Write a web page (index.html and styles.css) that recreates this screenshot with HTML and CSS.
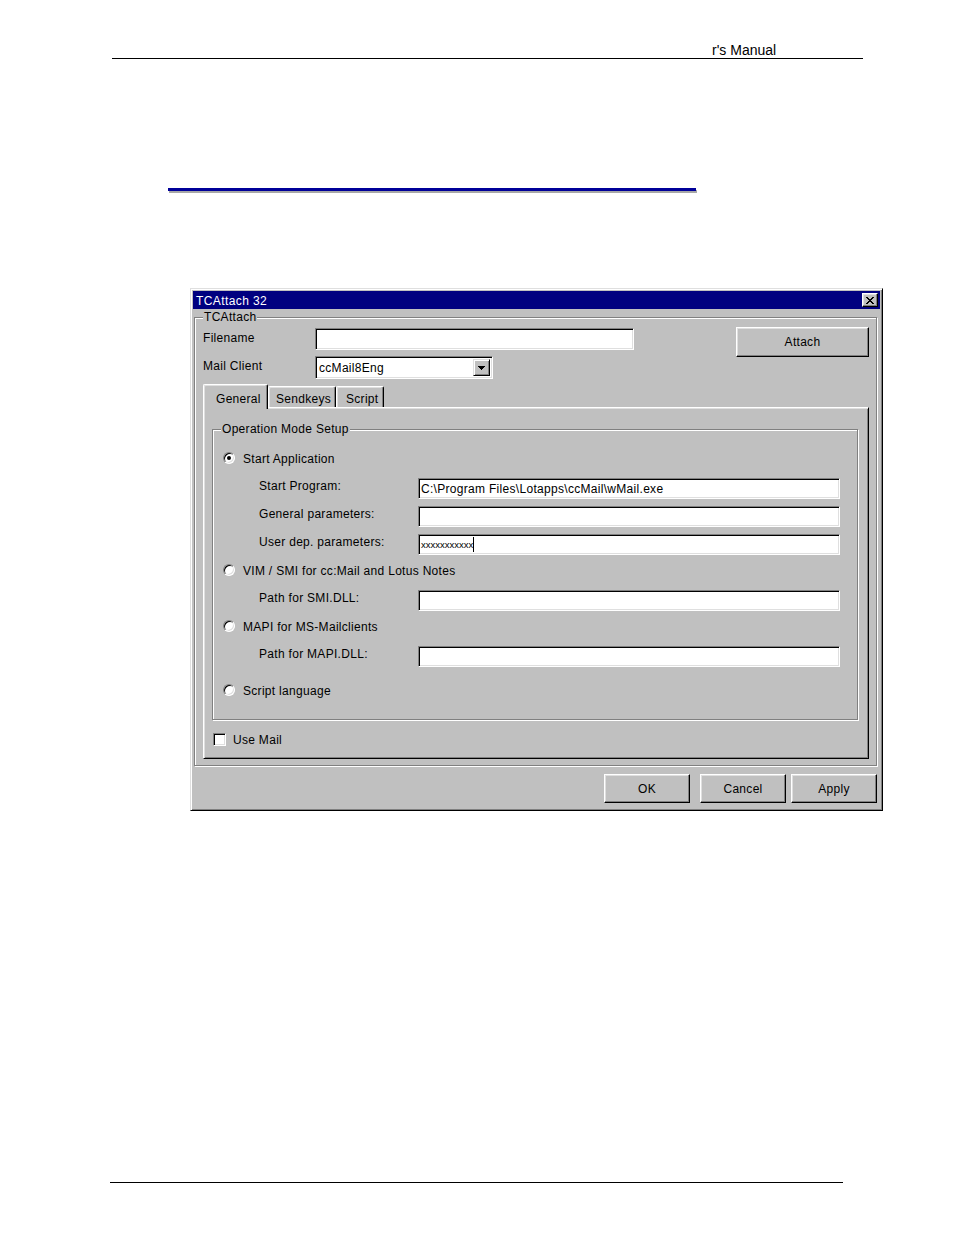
FILE: index.html
```html
<!DOCTYPE html>
<html lang="en">
<head>
<meta charset="utf-8">
<title>TCAttach 32</title>
<link rel="stylesheet" href="styles.css">
</head>
<body>
<div class="page">
  <div class="header"><span class="header-text">r's Manual</span></div>
  <div class="rule"></div>

  <div class="window">
    <div class="titlebar">
      <span class="title">TCAttach 32</span>
      <span class="close">
        <svg width="8" height="7" viewBox="0 0 8 7" shape-rendering="crispEdges"><path fill="#000" d="M0 0h2v1H0zM6 0h2v1H6zM1 1h2v1H1zM5 1h2v1H5zM2 2h4v1H2zM3 3h2v1H3zM2 4h4v1H2zM1 5h2v1H1zM5 5h2v1H5zM0 6h2v1H0zM6 6h2v1H6z"/></svg>
      </span>
    </div>

    <div class="client">
      <fieldset class="group main">
        <legend>TCAttach</legend>
        <div class="top">
          <div class="fields">
            <div class="frow r1"><span class="flabel">Filename</span><span class="input filename"></span></div>
            <div class="frow r2"><span class="flabel">Mail Client</span>
              <span class="input combo"><span class="combo-text">ccMail8Eng</span>
                <span class="drop"><svg width="7" height="4" viewBox="0 0 7 4" shape-rendering="crispEdges"><path fill="#000" d="M0 0h7v1H0zM1 1h5v1H1zM2 2h3v1H2zM3 3h1v1H3z"/></svg></span>
              </span>
            </div>
          </div>
          <div class="btn attach">Attach</div>
        </div>

        <div class="tabs">
          <div class="tab active t-general">General</div>
          <div class="tab t-send">Sendkeys</div>
          <div class="tab t-script">Script</div>
        </div>

        <div class="panel">
          <fieldset class="group ops">
            <legend>Operation Mode Setup</legend>
            <div class="rrow m14"><span class="radio checked"></span><span class="rtext">Start Application</span></div>
            <div class="field m12"><span class="plabel">Start Program:</span><span class="input pin"><span class="itext">C:\Program Files\Lotapps\ccMail\wMail.exe</span></span></div>
            <div class="field m7"><span class="plabel">General parameters:</span><span class="input pin"></span></div>
            <div class="field m7"><span class="plabel">User dep. parameters:</span><span class="input pin"><span class="mask">xxxxxxxxxxx</span><span class="caret"></span></span></div>
            <div class="rrow m7"><span class="radio"></span><span class="rtext">VIM / SMI for cc:Mail and Lotus Notes</span></div>
            <div class="field m12"><span class="plabel">Path for SMI.DLL:</span><span class="input pin"></span></div>
            <div class="rrow m7"><span class="radio"></span><span class="rtext">MAPI for MS-Mailclients</span></div>
            <div class="field m12"><span class="plabel">Path for MAPI.DLL:</span><span class="input pin"></span></div>
            <div class="rrow m15"><span class="radio"></span><span class="rtext">Script language</span></div>
          </fieldset>
          <div class="crow"><span class="checkbox"></span><span class="rtext">Use Mail</span></div>
        </div>
      </fieldset>

      <div class="buttons">
        <div class="btn dlg ok">OK</div>
        <div class="btn dlg cancel">Cancel</div>
        <div class="btn dlg">Apply</div>
      </div>
    </div>
  </div>

  <div class="footer"></div>
</div>
</body>
</html>
```

FILE: styles.css
```css
html, body {
  margin: 0;
  padding: 0;
  background: #fff;
}

.page {
  width: 954px;
  padding-top: 42px;
  font-family: "Liberation Sans", Arial, sans-serif;
  color: #000;
}

/* ---------- page header ---------- */
.header {
  margin-left: 112px;
  width: 751px;
  height: 16px;
  border-bottom: 1px solid #000;
}
.header-text {
  display: block;
  padding-left: 600px;
  font-size: 14px;
  line-height: 16px;
}

.rule {
  margin-left: 168px;
  margin-top: 129px;
  width: 528px;
  height: 3px;
  background: #000099;
  box-shadow: 1px 2px 0 #a8a8a8;
}

.footer {
  margin-left: 110px;
  margin-top: 371px;
  width: 733px;
  border-top: 1px solid #000;
}

/* ---------- window ---------- */
.window {
  margin-top: 97px;
  margin-left: 190px;
  width: 693px;
  box-sizing: border-box;
  padding: 2px;
  background: #c0c0c0;
  border: 1px solid;
  border-color: #dfdfdf #000 #000 #dfdfdf;
  box-shadow: inset 1px 1px #fff, inset -1px -1px #808080;
  font-size: 12px;
  letter-spacing: 0.3px;
}

.titlebar {
  height: 18px;
  background: #000080;
  color: #fff;
  display: flex;
  align-items: center;
  padding: 0 2px 0 3px;
}
.title {
  font-size: 12px;
  line-height: 14px;
  letter-spacing: 0.4px;
  padding-top: 1px;
}
.close {
  margin-left: auto;
  width: 16px;
  height: 14px;
  box-sizing: border-box;
  background: #c0c0c0;
  border: 1px solid;
  border-color: #fff #000 #000 #fff;
  box-shadow: inset -1px -1px #808080, inset 1px 1px #dfdfdf;
  display: flex;
  align-items: center;
  justify-content: center;
}
.close svg { display: block; }

.client {
  display: flex;
  flex-direction: column;
}

/* ---------- group boxes ---------- */
.group {
  min-width: 0;
  border: 1px solid #808080;
  box-shadow: inset 1px 1px #fff, 1px 1px #fff;
}
.group legend {
  padding: 0 1px;
  font-size: 12px;
  line-height: 13px;
  background: #c0c0c0;
}

.main {
  margin: 2px 3px 0 1px;
  padding: 3px 7px 6px 8px;
}

.top {
  display: flex;
  align-items: flex-start;
}
.fields {
  display: flex;
  flex-direction: column;
}
.frow {
  display: flex;
  align-items: flex-start;
}
.r1 { margin-top: 1px; }
.r2 { margin-top: 6px; }
.flabel {
  width: 112px;
  padding-top: 3px;
  line-height: 14px;
}

/* ---------- inputs ---------- */
.input {
  box-sizing: border-box;
  background: #fff;
  border: 1px solid;
  border-color: #808080 #fff #fff #808080;
  box-shadow: inset 1px 1px #000, inset -1px -1px #dfdfdf;
  display: flex;
  align-items: center;
  padding: 0 2px;
  white-space: nowrap;
  overflow: hidden;
}
.filename {
  width: 319px;
  height: 22px;
}
.combo {
  width: 178px;
  height: 23px;
  padding: 2px 2px 2px 3px;
  align-items: stretch;
}
.combo-text {
  display: flex;
  align-items: center;
  flex: 1;
  padding-top: 1px;
}
.drop {
  width: 17px;
  box-sizing: border-box;
  background: #c0c0c0;
  border: 1px solid;
  border-color: #dfdfdf #000 #000 #dfdfdf;
  box-shadow: inset 1px 1px #fff, inset -1px -1px #808080;
  display: flex;
  align-items: center;
  justify-content: center;
}
.drop svg { display: block; }

/* ---------- buttons ---------- */
.btn {
  box-sizing: border-box;
  background: #c0c0c0;
  border: 1px solid;
  border-color: #fff #000 #000 #fff;
  box-shadow: inset -1px -1px #808080, inset 1px 1px #dfdfdf;
  display: flex;
  align-items: center;
  justify-content: center;
  line-height: 14px;
}
.attach {
  margin-left: auto;
  width: 133px;
  height: 30px;
}

.buttons {
  display: flex;
  justify-content: flex-end;
  margin: 8px 3px 5px 0;
}
.dlg {
  width: 86px;
  height: 29px;
}
.ok { margin-right: 10px; }
.cancel { margin-right: 5px; }

/* ---------- tabs ---------- */
.tabs {
  display: flex;
  align-items: flex-end;
  height: 23px;
  margin-top: 5px;
}
.tab {
  box-sizing: border-box;
  height: 21px;
  padding-top: 5px;
  line-height: 14px;
  text-align: left;
  white-space: nowrap;
  border-left: 1px solid #fff;
  border-top: 1px solid #fff;
  border-right: 1px solid #000;
  box-shadow: inset -1px 0 #808080, inset 1px 1px #dfdfdf;
  border-top-left-radius: 2px;
  border-top-right-radius: 2px;
  background: #c0c0c0;
}
.tab.active {
  height: 25px;
  margin-bottom: -2px;
  padding-top: 7px;
  position: relative;
  z-index: 1;
}
.t-general { width: 65px; padding-left: 12px; }
.t-send { width: 68px; padding-left: 7px; }
.t-script { width: 48px; padding-left: 9px; }

.panel {
  border: 1px solid;
  border-color: #fff #000 #000 #fff;
  box-shadow: inset 1px 1px #dfdfdf, inset -1px -1px #808080;
  padding: 15px 10px 12px 8px;
  display: flex;
  flex-direction: column;
}

.ops {
  margin: 0;
  padding: 0 0 21px 10px;
  display: flex;
  flex-direction: column;
}
.ops legend {
  margin-left: -2px;
}

.rrow {
  display: flex;
  align-items: center;
  height: 16px;
  line-height: 14px;
}
.rtext {
  padding-top: 1px;
}
.field {
  display: flex;
  align-items: flex-start;
  height: 21px;
}
.plabel {
  margin-left: 36px;
  width: 159px;
  line-height: 13px;
  padding-top: 2px;
}
.pin {
  width: 422px;
  height: 21px;
}
.itext {
  padding-top: 1px;
}
.mask {
  font-size: 9.5px;
  line-height: 10px;
  letter-spacing: 0;
}
.caret {
  display: inline-block;
  width: 1px;
  height: 15px;
  background: #000;
}

.m7 { margin-top: 7px; }
.m12 { margin-top: 12px; }
.m14 { margin-top: 14px; }
.m15 { margin-top: 15px; }

.radio {
  position: relative;
  width: 12px;
  height: 12px;
  box-sizing: border-box;
  border-radius: 50%;
  background: #fff;
  border: 1px solid;
  border-color: #808080 #fff #fff #808080;
  box-shadow: inset 1px 1px #000, inset -1px -1px #dfdfdf;
  margin-right: 8px;
  flex: none;
}
.radio.checked::after {
  content: "";
  position: absolute;
  left: 3px;
  top: 3px;
  width: 4px;
  height: 4px;
  border-radius: 50%;
  background: #000;
}

.crow {
  display: flex;
  align-items: center;
  margin-top: 13px;
  margin-left: 1px;
  height: 13px;
  line-height: 13px;
}
.checkbox {
  width: 13px;
  height: 13px;
  box-sizing: border-box;
  background: #fff;
  border: 1px solid;
  border-color: #808080 #fff #fff #808080;
  box-shadow: inset 1px 1px #000, inset -1px -1px #dfdfdf;
  margin-right: 7px;
  flex: none;
}
```
